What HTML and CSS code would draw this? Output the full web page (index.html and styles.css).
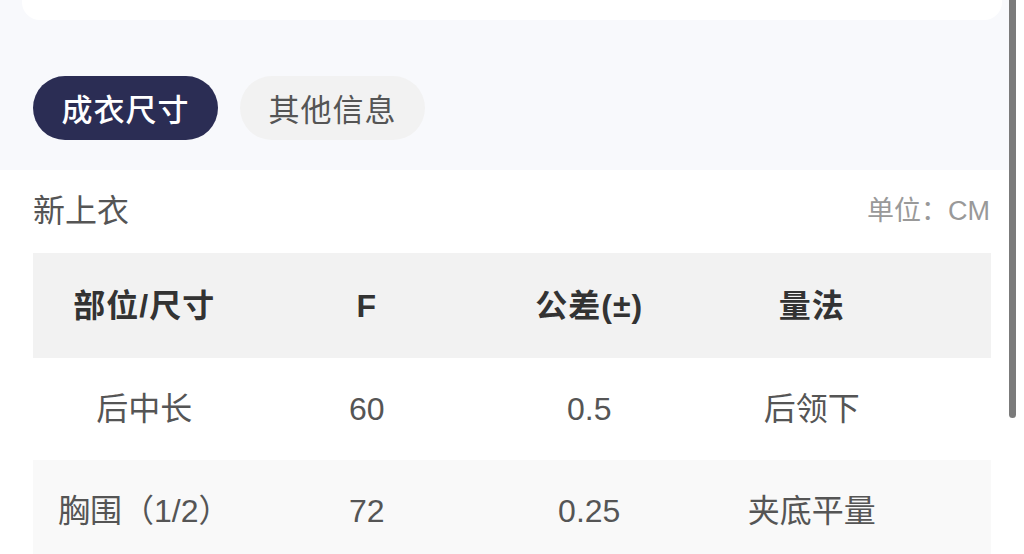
FILE: index.html
```html
<!DOCTYPE html>
<html lang="zh">
<head>
<meta charset="utf-8">
<link rel="stylesheet" href="styles.css">
</head>
<body>
<div class="page">
  <div class="top">
    <div class="card"></div>
    <div class="tabs">
      <div class="tab active">成衣尺寸</div>
      <div class="tab">其他信息</div>
    </div>
  </div>
  <div class="section">
    <div class="head">
      <div class="title">新上衣</div>
      <div class="unit">单位：CM</div>
    </div>
    <div class="table">
      <div class="row header">
        <div class="cell">部位/尺寸</div>
        <div class="cell">F</div>
        <div class="cell">公差(±)</div>
        <div class="cell">量法</div>
      </div>
      <div class="row">
        <div class="cell">后中长</div>
        <div class="cell">60</div>
        <div class="cell">0.5</div>
        <div class="cell">后领下</div>
      </div>
      <div class="row alt">
        <div class="cell">胸围（1/2）</div>
        <div class="cell">72</div>
        <div class="cell">0.25</div>
        <div class="cell">夹底平量</div>
      </div>
    </div>
  </div>
</div>
<div class="thumb"></div>
</body>
</html>
```
FILE: styles.css
```css
html, body {
  margin: 0;
  padding: 0;
  background: #ffffff;
  overflow: hidden;
}
body {
  width: 1024px;
  height: 554px;
  position: relative;
  font-family: "Liberation Sans", "Noto Sans CJK SC", sans-serif;
}
.page {
  width: 1009px;
}
.top {
  background: #f8f9fc;
  padding: 0 7px 30px 22px;
}
.card {
  height: 20px;
  background: #ffffff;
  border-radius: 0 0 18px 18px;
}
.tabs {
  display: flex;
  gap: 22px;
  padding: 56px 0 0 11px;
}
.tab {
  height: 64px;
  width: 185px;
  border-radius: 32px;
  background: #f2f2f2;
  color: #555555;
  font-size: 31px;
  display: flex;
  align-items: center;
  justify-content: center;
  letter-spacing: 1px;
  padding-bottom: 2px;
  box-sizing: border-box;
}
.tab.active {
  background: #2b2d54;
  color: #ffffff;
  font-weight: 500;
}
.section {
  background: #ffffff;
  padding: 0 18px 0 33px;
}
.head {
  height: 83px;
  display: flex;
  align-items: center;
  justify-content: space-between;
}
.title {
  font-size: 32px;
  color: #555555;
  line-height: 1;
  margin-top: -2px;
}
.unit {
  font-size: 27px;
  color: #999999;
  line-height: 1;
  margin-right: 1px;
}
.table {
  display: flex;
  flex-direction: column;
}
.row {
  display: grid;
  grid-template-columns: repeat(4, 222.5px);
  height: 102px;
  align-items: center;
  font-size: 32px;
  color: #555555;
}
.row.header {
  height: 105px;
  background: #f2f2f2;
  color: #333333;
  font-weight: bold;
  font-size: 32px;
}
.row.alt {
  background: #f9f9f9;
}
.cell {
  text-align: center;
  line-height: 1;
}
.header .cell {
  letter-spacing: 1px;
}
.thumb {
  position: absolute;
  left: 1009px;
  top: 0;
  width: 7px;
  height: 418px;
  background: #7b7b7b;
  border-radius: 0 0 4px 4px;
}
```
